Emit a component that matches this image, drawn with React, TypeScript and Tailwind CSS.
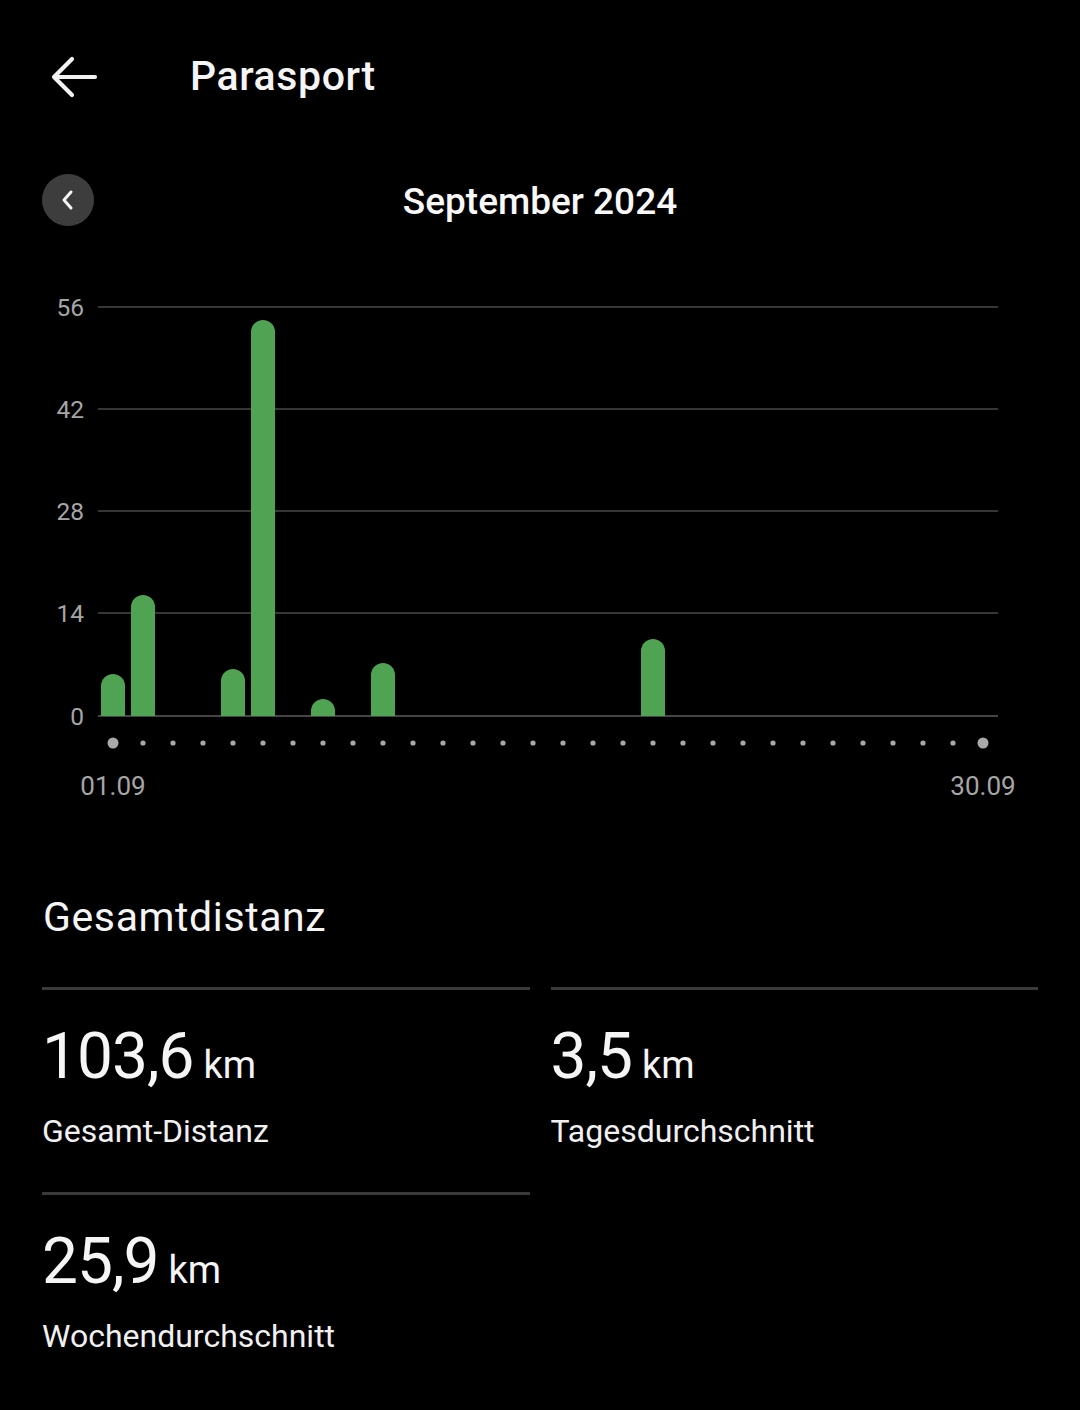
import React from "react";

const bars: { day: number; h: number }[] = [
  { day: 1, h: 42 },
  { day: 2, h: 121 },
  { day: 5, h: 47 },
  { day: 6, h: 396 },
  { day: 8, h: 17 },
  { day: 10, h: 53 },
  { day: 19, h: 77 },
];

const gridLines = [
  { label: "56", y: 17 },
  { label: "42", y: 119 },
  { label: "28", y: 221 },
  { label: "14", y: 323 },
  { label: "0", y: 426 },
];

const BASE = 426;
const dayX = (d: number) => 113 + 30 * (d - 1);

function barPath(d: number, h: number) {
  const w = 24;
  const r = 12;
  const x = dayX(d) - w / 2;
  const top = BASE - h;
  return `M${x},${BASE} V${top + r} A${r},${r} 0 0 1 ${x + w},${top + r} V${BASE} Z`;
}

function Chart() {
  return (
    <svg width="1080" height="520" viewBox="0 0 1080 520" className="block">
      {gridLines.map((g) => (
        <g key={g.label}>
          <line x1="98" x2="998" y1={g.y} y2={g.y} stroke={g.label === "0" ? "#454545" : "#363636"} strokeWidth="2" />
          <text
            x="84"
            y={g.y}
            textAnchor="end"
            dominantBaseline="central"
            fill="#a6a6a6"
            fontSize="24.5"
            fontFamily="Roboto, sans-serif"
          >
            {g.label}
          </text>
        </g>
      ))}
      {bars.map((b) => (
        <path key={b.day} d={barPath(b.day, b.h)} fill="#4fa352" />
      ))}
      {Array.from({ length: 30 }, (_, i) => i + 1).map((d) => (
        <circle
          key={d}
          cx={dayX(d)}
          cy="453"
          r={d === 1 || d === 30 ? 5.5 : 2.6}
          fill="#a9a9a9"
        />
      ))}
      <text x={dayX(1)} y="496" textAnchor="middle" dominantBaseline="central" fill="#a6a6a6" fontSize="26" fontFamily="Roboto, sans-serif">
        01.09
      </text>
      <text x={dayX(30)} y="496" textAnchor="middle" dominantBaseline="central" fill="#a6a6a6" fontSize="26" fontFamily="Roboto, sans-serif">
        30.09
      </text>
    </svg>
  );
}

function Stat({ value, label }: { value: string; label: string }) {
  return (
    <div className="h-[205px] pt-[35px] border-t-[3px] border-[#3a3a3a]">
      <div className="flex items-baseline leading-none">
        <span className="text-[64px] text-[#f5f5f5] tracking-[-1px]">{value}</span>
        <span className="ml-[10px] text-[38px] text-[#f5f5f5]">km</span>
      </div>
      <div className="mt-[23px] text-[32px] leading-[38px] text-[#f0f0f0]">{label}</div>
    </div>
  );
}

export default function App() {
  return (
    <div className="w-[1080px] h-[1410px] bg-black text-white overflow-hidden" style={{ fontFamily: "Roboto, 'Noto Sans', sans-serif" }}>
      {/* header */}
      <div className="h-[154px] flex items-center">
        <svg width="48" height="44" viewBox="0 0 48 44" className="ml-[51px]" fill="none" stroke="#f2f2f2" strokeWidth="4.2" strokeLinecap="round" strokeLinejoin="round">
          <path d="M44 22H4" />
          <path d="M21 4L3 22l18 18" />
        </svg>
        <h1 className="ml-[91px] text-[41px] font-medium text-[#f5f5f5] tracking-[0.6px]">Parasport</h1>
      </div>

      {/* month nav */}
      <div className="mt-[20px] h-[52px] relative flex items-center justify-center">
        <button className="absolute left-[42px] top-0 w-[52px] h-[52px] rounded-full bg-[#3d3d3d] flex items-center justify-center">
          <svg width="14" height="22" viewBox="0 0 14 22" fill="none" stroke="#f5f5f5" strokeWidth="3" strokeLinecap="round" strokeLinejoin="round">
            <path d="M10 3L3 11l7 8" />
          </svg>
        </button>
        <span className="pt-[3px] text-[37px] font-medium text-[#f8f8f8]">September 2024</span>
      </div>

      {/* chart */}
      <div className="mt-[64px]">
        <Chart />
      </div>

      {/* summary */}
      <div className="px-[42px] mt-[83px]">
        <h2 className="text-[41px] leading-[48px] text-[#f5f5f5] pl-[1px] tracking-[0.6px]">Gesamtdistanz</h2>
        <div className="mt-[46px] grid grid-cols-2 gap-x-[21px]">
          <Stat value="103,6" label="Gesamt-Distanz" />
          <Stat value="3,5" label="Tagesdurchschnitt" />
          <Stat value="25,9" label="Wochendurchschnitt" />
        </div>
      </div>
    </div>
  );
}
